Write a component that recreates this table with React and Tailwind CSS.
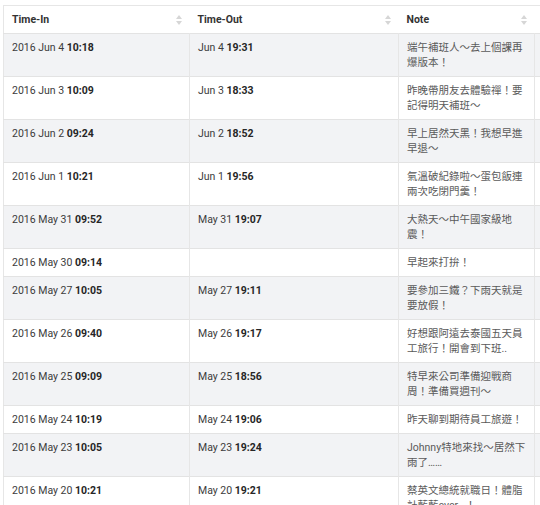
import React from 'react';

const rows = [
  { inDate: '2016 Jun 4', inTime: '10:18', outDate: 'Jun 4', outTime: '19:31', note: '端午補班人～去上個課再爆版本！' },
  { inDate: '2016 Jun 3', inTime: '10:09', outDate: 'Jun 3', outTime: '18:33', note: '昨晚帶朋友去體驗禪！要記得明天補班～' },
  { inDate: '2016 Jun 2', inTime: '09:24', outDate: 'Jun 2', outTime: '18:52', note: '早上居然天黑！我想早進早退～' },
  { inDate: '2016 Jun 1', inTime: '10:21', outDate: 'Jun 1', outTime: '19:56', note: '氣溫破紀錄啦～蛋包飯連兩次吃閉門羹！' },
  { inDate: '2016 May 31', inTime: '09:52', outDate: 'May 31', outTime: '19:07', note: '大熱天～中午國家級地震！' },
  { inDate: '2016 May 30', inTime: '09:14', outDate: '', outTime: '', note: '早起來打拚！' },
  { inDate: '2016 May 27', inTime: '10:05', outDate: 'May 27', outTime: '19:11', note: '要參加三鐵？下雨天就是要放假！' },
  { inDate: '2016 May 26', inTime: '09:40', outDate: 'May 26', outTime: '19:17', note: '好想跟阿遠去泰國五天員工旅行！開會到下班..' },
  { inDate: '2016 May 25', inTime: '09:09', outDate: 'May 25', outTime: '18:56', note: '特早來公司準備迎戰商周！準備買週刊～' },
  { inDate: '2016 May 24', inTime: '10:19', outDate: 'May 24', outTime: '19:06', note: '昨天聊到期待員工旅遊！' },
  { inDate: '2016 May 23', inTime: '10:05', outDate: 'May 23', outTime: '19:24', note: 'Johnny特地來找～居然下雨了……' },
  { inDate: '2016 May 20', inTime: '10:21', outDate: 'May 20', outTime: '19:21', note: '蔡英文總統就職日！體脂計藍藍ever~！' }
];

const SortIcon = () => (
  <svg width="6" height="10" viewBox="0 0 6 10" className="shrink-0">
    <path d="M3 0 L6 4 L0 4 Z" fill="#d6d6d6" />
    <path d="M0 6 L6 6 L3 10 Z" fill="#d6d6d6" />
  </svg>
);

const HeaderCell = ({ label, width }) => (
  <th className={`${width} px-2 py-[6px] text-left align-middle font-bold text-[#333]`}>
    <div className="flex items-center justify-between leading-[15px]">
      <span>{label}</span>
      <SortIcon />
    </div>
  </th>
);

export default function App() {
  return (
    <div
      className="w-[540px] h-[505px] overflow-hidden bg-white pt-[5px] pl-[3px] text-[10.5px]"
      style={{ fontFamily: 'Roboto, "Noto Sans CJK TC", sans-serif' }}
    >
      <table className="table-fixed border-collapse w-[591px] border-l border-t border-[#e6e6e6]">
        <thead>
          <tr className="border-b border-[#e3e3e3] bg-white">
            <HeaderCell label="Time-In" width="w-[186px]" />
            <HeaderCell label="Time-Out" width="w-[209px]" />
            <HeaderCell label="Note" width="w-[136px]" />
            <th className="w-[60px]" />
          </tr>
        </thead>
        <tbody>
          {rows.map((row, i) => (
            <tr
              key={row.inDate}
              className={`border-b border-[#e3e3e3] ${i % 2 === 0 ? 'bg-[#f2f3f5]' : 'bg-white'}`}
            >
              <td className="px-2 py-[6px] align-top leading-[15px] text-[#3c3c3c] border-r border-[#e6e6e6]">
                {row.inDate} <b className="text-[#262626]">{row.inTime}</b>
              </td>
              <td className="px-2 py-[6px] align-top leading-[15px] text-[#3c3c3c] border-r border-[#e6e6e6]">
                {row.outDate && (
                  <>
                    {row.outDate} <b className="text-[#262626]">{row.outTime}</b>
                  </>
                )}
              </td>
              <td className="px-2 py-[6px] align-top leading-[15px] text-[#5a5a5a] border-r border-[#e6e6e6] break-all">
                {row.note}
              </td>
              <td />
            </tr>
          ))}
        </tbody>
      </table>
    </div>
  );
}
